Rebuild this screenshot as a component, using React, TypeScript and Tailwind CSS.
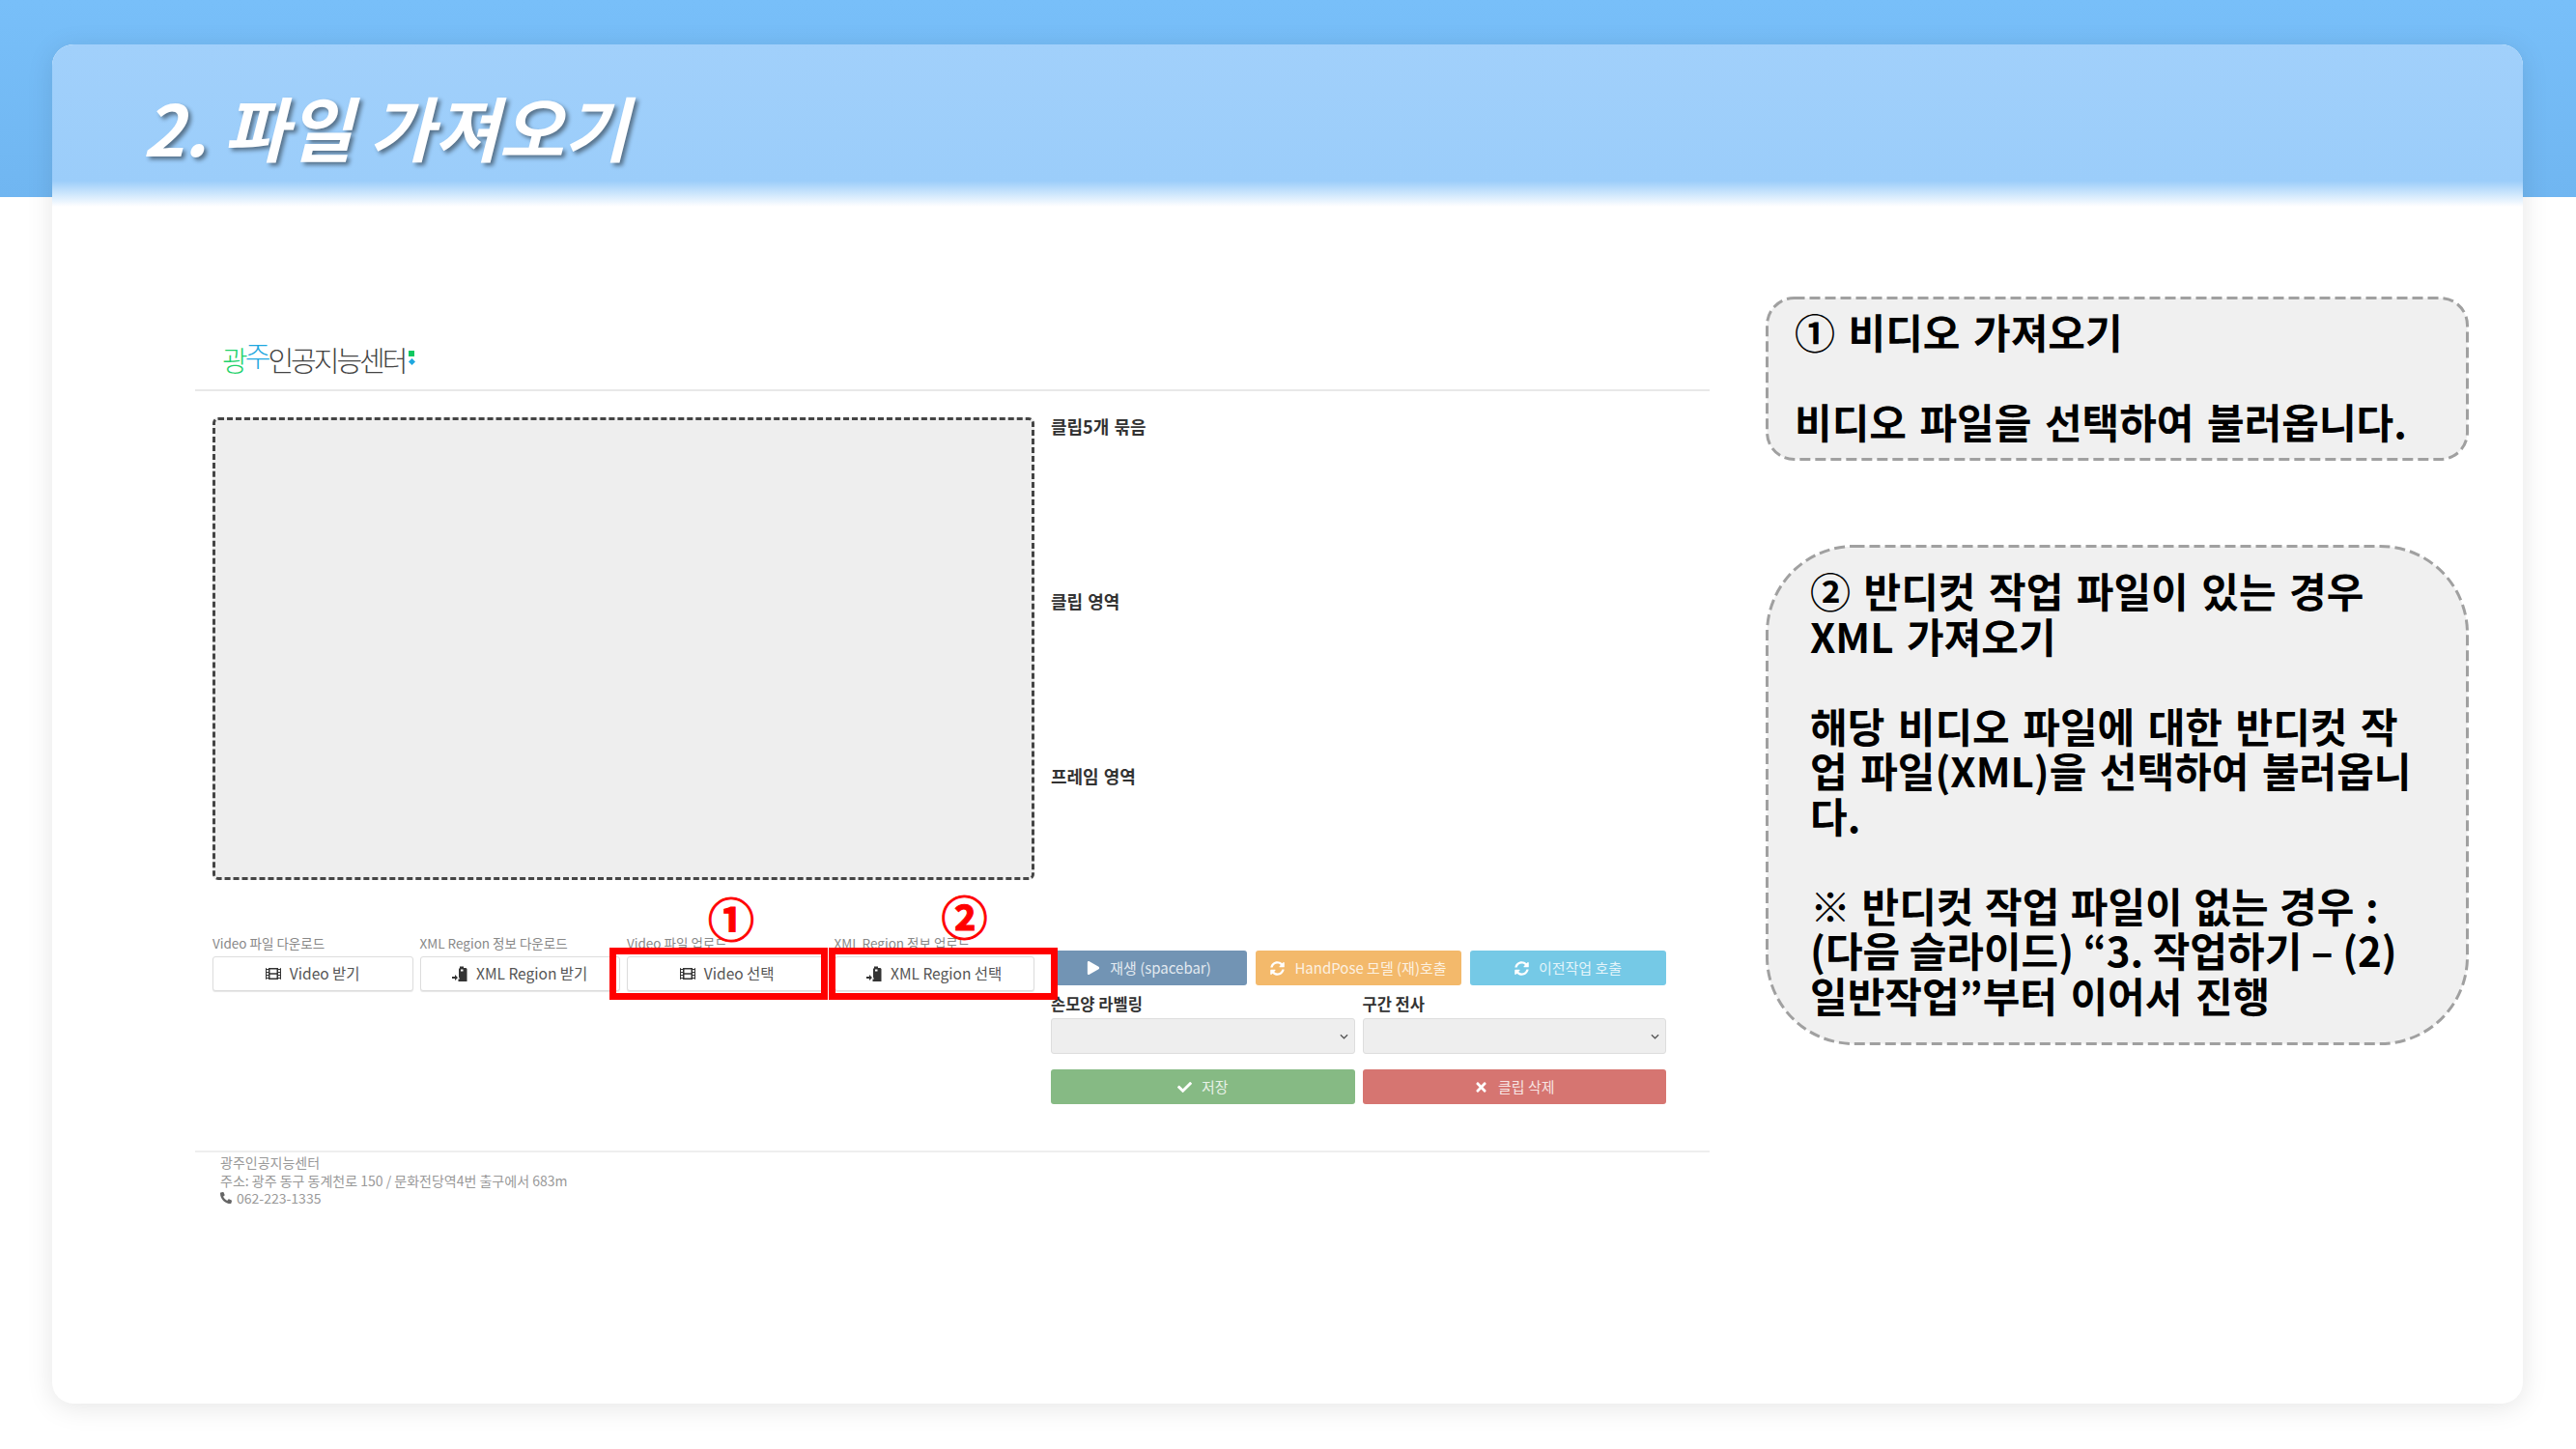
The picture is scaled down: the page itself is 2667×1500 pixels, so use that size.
import { FaCheck, FaFilm, FaPlay, FaPhoneAlt, FaSyncAlt, FaTimes } from "react-icons/fa";

const sans = "font-['Noto_Sans_CJK_KR','Noto_Sans',sans-serif]";

function HandIcon() {
  return (
    <svg viewBox="0 0 16 16" className="h-[16px] w-[16px] shrink-0 fill-[#333]">
      <path d="M8 0.5h4v1.5h2.5l1 1V16H6.5v-2.5H8l-1-2V3l1-1z" />
      <path d="M9 3.5h2.5v2H9z" className="fill-white" />
      <path d="M0 11h3V9l3 3-3 3v-2H0z" />
    </svg>
  );
}

function FileButton({ label, icon, text }: { label: string; icon: React.ReactNode; text: string }) {
  return (
    <div className="w-full">
      <div className="mb-[3px] h-[18px] text-[13.5px] leading-[14px] whitespace-nowrap text-[#888]">{label}</div>
      <div className="flex h-[36px] items-center justify-center gap-[9px] rounded-[3px] border border-[#ddd] bg-white text-[15.5px] text-[#555] shadow-[0_1px_1px_rgba(0,0,0,0.1)]">
        {icon}
        <span>{text}</span>
      </div>
    </div>
  );
}

function Marked({ num, className, children }: { num: string; className: string; children: React.ReactNode }) {
  return (
    <div className="relative">
      {children}
      <div className={`absolute border-[7px] border-[#ff0000] ${className}`} />
      <div className={`absolute text-[48px] leading-[54px] font-bold [-webkit-text-stroke:1px_#ff0000] text-[#ff0000] ${num === "①" ? "top-[-47px] left-[84px]" : "top-[-49px] left-[111px]"}`}>
        {num}
      </div>
    </div>
  );
}

function ActionButton({ className, icon, text }: { className: string; icon: React.ReactNode; text: string }) {
  return (
    <div className={`flex h-[36px] items-center justify-center gap-[10px] rounded-[3px] text-[15px] whitespace-nowrap text-[#fff] ${className}`}>
      {icon}
      <span className="opacity-80">{text}</span>
    </div>
  );
}

function SelectBox() {
  return (
    <div className="flex h-[37px] items-center justify-end rounded-[3px] border border-[#ddd] bg-[#eeeeee] pr-[6px]">
      <svg viewBox="0 0 10 6" className="h-[6px] w-[9px] fill-none stroke-[#555] stroke-[1.4]">
        <path d="M1 1l4 4 4-4" />
      </svg>
    </div>
  );
}

function Callout({ h, r, className, children }: { h: number; r: number; className: string; children: React.ReactNode }) {
  return (
    <div className={`relative whitespace-nowrap ${className}`}>
      <svg width="728" height={h} className="absolute top-0 left-0">
        <rect x="1.5" y="1.5" width="725" height={h - 3} rx={r} fill="#f0f0f0" stroke="#a0a0a0" strokeWidth="3" strokeDasharray="11 5" />
      </svg>
      <div className="relative">{children}</div>
    </div>
  );
}

export default function App() {
  return (
    <div className={`relative h-[1500px] w-[2667px] overflow-hidden bg-white ${sans}`}>
      <div className="absolute inset-x-0 top-0 h-[204px] bg-[linear-gradient(180deg,#78bff9,#70b6f1)]" />

      <div className="relative mx-[54px] mt-[46px] h-[1407px] w-[2558px] rounded-[22px] bg-white shadow-[0_4px_28px_rgba(0,0,0,0.1)]">
        <div className="h-[168px] rounded-t-[22px] bg-[linear-gradient(180deg,#a1d0fb_0%,#9bcdfa_84%,#ffffff_100%)] pt-[42px] pl-[94px]">
          <h1 className="text-[73px] leading-[84px] font-bold whitespace-nowrap text-white italic [text-shadow:3px_3px_4px_rgba(0,0,0,0.45)]">
            2. 파일 가져오기
          </h1>
        </div>

        <div className="flex pl-[148px]">
          <section className="mt-[127px] w-[1568px]">
            <div className="flex h-[64px] items-start border-b-2 border-[#e8e8e8] pt-[6px] pl-[28px]">
              <div className="flex items-end text-[29px] leading-[40px] font-light tracking-[-3px] text-[#444]">
                <span className="text-[#1fd26c]">광</span>
                <span className="mb-[5px] text-[#1fa8e0]">주</span>
                <span>인공지능센터</span>
                <div className="mb-[15px] ml-[4px] flex flex-col items-center gap-[3px]">
                  <span className="h-[6px] w-[6px] bg-[#10c860]" />
                  <span className="h-[5px] w-[5px] rotate-45 bg-[#1fa8e0]" />
                </div>
              </div>
            </div>

            <div className="flex h-[786px] gap-[17px] pt-[27px] pl-[18px]">
              <div className="w-[851px]">
                <div className="h-[479px] rounded-[6px] border-[3px] border-dashed border-[#444] bg-[#eeeeee]" />
                <div className="mt-[58px] grid grid-cols-4 gap-[7px]">
                  <FileButton label="Video 파일 다운로드" icon={<FaFilm className="text-[16px] text-[#333]" />} text="Video 받기" />
                  <FileButton label="XML Region 정보 다운로드" icon={<HandIcon />} text="XML Region 받기" />
                  <Marked num="①" className="top-[12px] right-0 bottom-[-9px] left-[-18px]">
                    <FileButton label="Video 파일 업로드" icon={<FaFilm className="text-[16px] text-[#333]" />} text="Video 선택" />
                  </Marked>
                  <Marked num="②" className="top-[12px] right-[-24px] bottom-[-9px] left-[-6px]">
                    <FileButton label="XML Region 정보 업로드" icon={<HandIcon />} text="XML Region 선택" />
                  </Marked>
                </div>
              </div>

              <div className="w-[637px]">
                {["클립5개 묶음", "클립 영역", "프레임 영역"].map((t) => (
                  <div key={t} className="h-[181px] text-[18px] leading-[18px] font-bold [word-spacing:1px] text-[#333]">{t}</div>
                ))}
                <div className="mt-[9px] grid grid-cols-[203px_213px_203px] gap-[9px]">
                  <ActionButton className="bg-[#7294b4]" icon={<FaPlay className="text-[14px]" />} text="재생 (spacebar)" />
                  <ActionButton className="bg-[#f3b96b]" icon={<FaSyncAlt className="text-[15px]" />} text="HandPose 모델 (재)호출" />
                  <ActionButton className="bg-[#75c9e6]" icon={<FaSyncAlt className="text-[15px]" />} text="이전작업 호출" />
                </div>
                <div className="mt-[8px] grid grid-cols-2 gap-[8px]">
                  <div>
                    <div className="mb-[4px] h-[22px] text-[16.5px] leading-[22px] font-bold text-[#333]">손모양 라벨링</div>
                    <SelectBox />
                    <ActionButton className="mt-[16px] bg-[#86ba84]" icon={<FaCheck className="text-[15px]" />} text="저장" />
                  </div>
                  <div>
                    <div className="mb-[4px] h-[22px] text-[16.5px] leading-[22px] font-bold text-[#333]">구간 전사</div>
                    <SelectBox />
                    <ActionButton className="mt-[16px] bg-[#d67571]" icon={<FaTimes className="text-[15px]" />} text="클립 삭제" />
                  </div>
                </div>
              </div>
            </div>

            <footer className="border-t-2 border-[#eeeeee] pt-[1px] pl-[26px] text-[14px] leading-[18.5px] text-[#999]">
              <div>광주인공지능센터</div>
              <div>주소: 광주 동구 동계천로 150 / 문화전당역4번 출구에서 683m</div>
              <div className="flex items-center gap-[5px]">
                <FaPhoneAlt className="text-[12px] text-[#666]" />
                <span>062-223-1335</span>
              </div>
            </footer>
          </section>

          <aside className="mt-[93px] ml-[58px] flex w-[728px] flex-col gap-[87px] text-[42px] leading-[46.5px] font-bold [word-spacing:4px] text-black">
            <Callout h={170} r={28} className="h-[170px] pt-[13px] pl-[30px]">
              <div>① 비디오 가져오기</div>
              <div>&nbsp;</div>
              <div>비디오 파일을 선택하여 불러옵니다.</div>
            </Callout>
            <Callout h={518} r={90} className="h-[518px] pt-[24px] pl-[46px]">
              <div>② 반디컷 작업 파일이 있는 경우</div>
              <div>XML 가져오기</div>
              <div>&nbsp;</div>
              <div>해당 비디오 파일에 대한 반디컷 작</div>
              <div>업 파일(XML)을 선택하여 불러옵니</div>
              <div>다.</div>
              <div>&nbsp;</div>
              <div className="[word-spacing:2px]">※ 반디컷 작업 파일이 없는 경우 :</div>
              <div className="[word-spacing:0px]">(다음 슬라이드) “3. 작업하기 – (2)</div>
              <div>일반작업”부터 이어서 진행</div>
            </Callout>
          </aside>
        </div>
      </div>
    </div>
  );
}
